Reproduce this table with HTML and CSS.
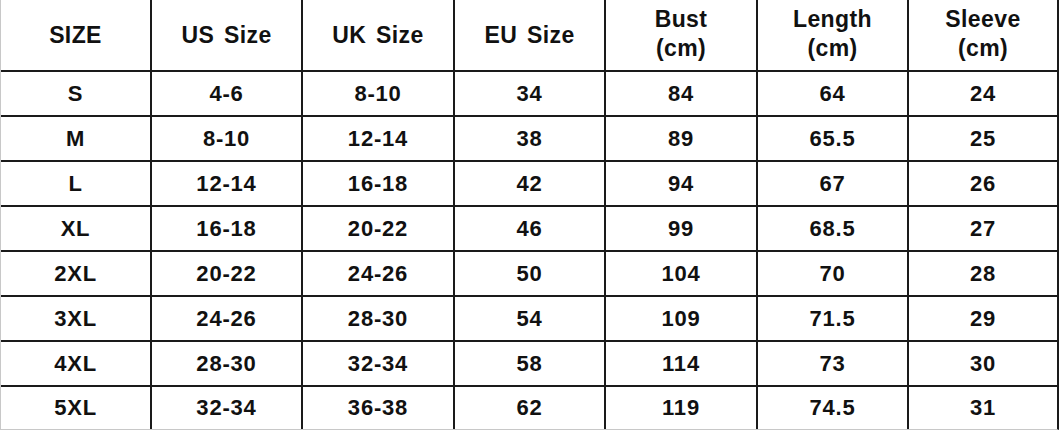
FILE: index.html
```html
<!DOCTYPE html>
<html>
<head>
<meta charset="utf-8">
<link rel="stylesheet" href="styles.css">
</head>
<body>
<div class="chart">
  <div class="cell head">SIZE</div>
  <div class="cell head">US Size</div>
  <div class="cell head">UK Size</div>
  <div class="cell head">EU Size</div>
  <div class="cell head two">Bust<br>(cm)</div>
  <div class="cell head two">Length<br>(cm)</div>
  <div class="cell head two">Sleeve<br>(cm)</div>

  <div class="cell">S</div><div class="cell">4-6</div><div class="cell">8-10</div><div class="cell">34</div><div class="cell">84</div><div class="cell">64</div><div class="cell">24</div>
  <div class="cell">M</div><div class="cell">8-10</div><div class="cell">12-14</div><div class="cell">38</div><div class="cell">89</div><div class="cell">65.5</div><div class="cell">25</div>
  <div class="cell">L</div><div class="cell">12-14</div><div class="cell">16-18</div><div class="cell">42</div><div class="cell">94</div><div class="cell">67</div><div class="cell">26</div>
  <div class="cell">XL</div><div class="cell">16-18</div><div class="cell">20-22</div><div class="cell">46</div><div class="cell">99</div><div class="cell">68.5</div><div class="cell">27</div>
  <div class="cell">2XL</div><div class="cell">20-22</div><div class="cell">24-26</div><div class="cell">50</div><div class="cell">104</div><div class="cell">70</div><div class="cell">28</div>
  <div class="cell">3XL</div><div class="cell">24-26</div><div class="cell">28-30</div><div class="cell">54</div><div class="cell">109</div><div class="cell">71.5</div><div class="cell">29</div>
  <div class="cell">4XL</div><div class="cell">28-30</div><div class="cell">32-34</div><div class="cell">58</div><div class="cell">114</div><div class="cell">73</div><div class="cell">30</div>
  <div class="cell">5XL</div><div class="cell">32-34</div><div class="cell">36-38</div><div class="cell">62</div><div class="cell">119</div><div class="cell">74.5</div><div class="cell">31</div>
</div>
</body>
</html>
```
FILE: styles.css
```css
html, body {
  margin: 0;
  padding: 0;
  background: #ffffff;
}
.chart {
  box-sizing: border-box;
  width: 1059px;
  height: 430px;
  display: grid;
  grid-template-columns: 149px 149px 150px 149px 150px 149px 148px;
  grid-template-rows: 70px repeat(7, 43px) 42px;
  column-gap: 2px;
  row-gap: 2px;
  background: #1a1a1a;
  border-left: 1px solid #c8c8c8;
  border-right: 2px solid #1a1a1a;
  border-bottom: 1px solid #c8c8c8;
  font-family: "Liberation Sans", Arial, sans-serif;
  font-weight: bold;
  color: #111111;
}
.cell {
  background: #ffffff;
  display: flex;
  align-items: center;
  justify-content: center;
  text-align: center;
  font-size: 22px;
  letter-spacing: 0.8px;
}
.head {
  font-size: 23px;
  letter-spacing: 0.4px;
  word-spacing: 3px;
}
.two {
  line-height: 29px;
  padding-bottom: 2px;
}
```
